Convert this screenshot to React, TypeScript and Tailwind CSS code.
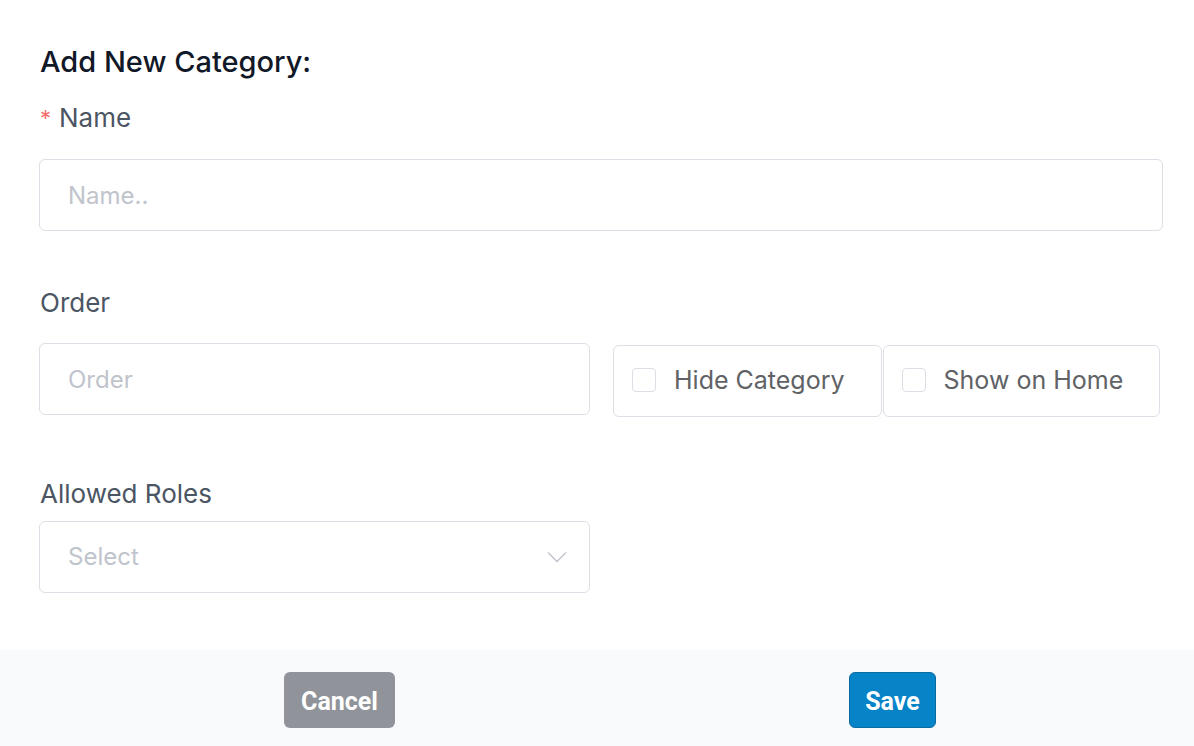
import React from 'react';

function Checkbox({ label }: { label: string }) {
  return (
    <label className="mt-[2px] flex h-[72px] shrink-0 items-center gap-[18px] whitespace-nowrap rounded-md border border-[#dcdfe6] pl-[18px] pr-[36px] text-[25px] text-[#606266]">
      <span className="-mt-[2px] h-[24px] w-[24px] shrink-0 rounded-[4px] border border-[#dcdfe6] bg-white" />
      <span>{label}</span>
    </label>
  );
}

export default function App() {
  return (
    <div className="min-h-[746px] bg-white font-['Inter',sans-serif]">
      <div className="px-[39px] pt-[44px]">
        <h1 className="h-[36px] pl-px text-[29px] font-medium leading-[36px] text-[#111827]">
          Add New Category:
        </h1>

        <div className="mt-[22px] flex h-[32px] items-center pl-px text-[26px] leading-[32px] text-[#4b5563]">
          <span className="mr-[8px] text-[22px] leading-[32px] text-[#f56c6c]">*</span>
          <span>Name</span>
        </div>
        <input
          placeholder="Name.."
          className="mt-[25px] h-[72px] w-[1124px] rounded-md border border-[#dcdfe6] px-[28px] text-[24px] text-[#606266] outline-none placeholder:text-[#c0c4cc]"
        />

        <div className="mt-[56px] h-[32px] pl-px text-[26px] leading-[32px] text-[#4b5563]">Order</div>
        <div className="mt-[24px] flex items-start">
          <input
            placeholder="Order"
            className="h-[72px] w-[551px] shrink-0 rounded-md border border-[#dcdfe6] px-[28px] text-[24px] text-[#606266] outline-none placeholder:text-[#c0c4cc]"
          />
          <div className="ml-[23px] flex shrink-0 gap-px">
            <Checkbox label="Hide Category" />
            <Checkbox label="Show on Home" />
          </div>
        </div>

        <div className="mt-[61px] h-[32px] pl-px text-[26px] leading-[32px] text-[#4b5563]">Allowed Roles</div>
        <div className="mt-[11px] flex h-[72px] w-[551px] items-center justify-between rounded-md border border-[#dcdfe6] pl-[28px] pr-[22px] text-[24px] text-[#c0c4cc]">
          <span>Select</span>
          <svg width="20" height="12" viewBox="0 0 20 12" fill="none">
            <path d="M1 1.5l9 9 9-9" stroke="#c0c4cc" strokeWidth="1.4" />
          </svg>
        </div>
      </div>

      <div className="mt-[57px] flex h-[96px] items-start bg-[#f9fafb] pt-[22px]">
        <button className="ml-[284px] h-[56px] w-[111px] rounded-md bg-[#909399] pt-[3px] font-['Roboto',sans-serif] text-[25px] font-bold text-white">
          Cancel
        </button>
        <button className="ml-[454px] h-[56px] w-[87px] rounded-md border border-[#0a6ba3] bg-[#0783c8] pt-[3px] font-['Roboto',sans-serif] text-[25px] font-bold text-white">
          Save
        </button>
      </div>
    </div>
  );
}
